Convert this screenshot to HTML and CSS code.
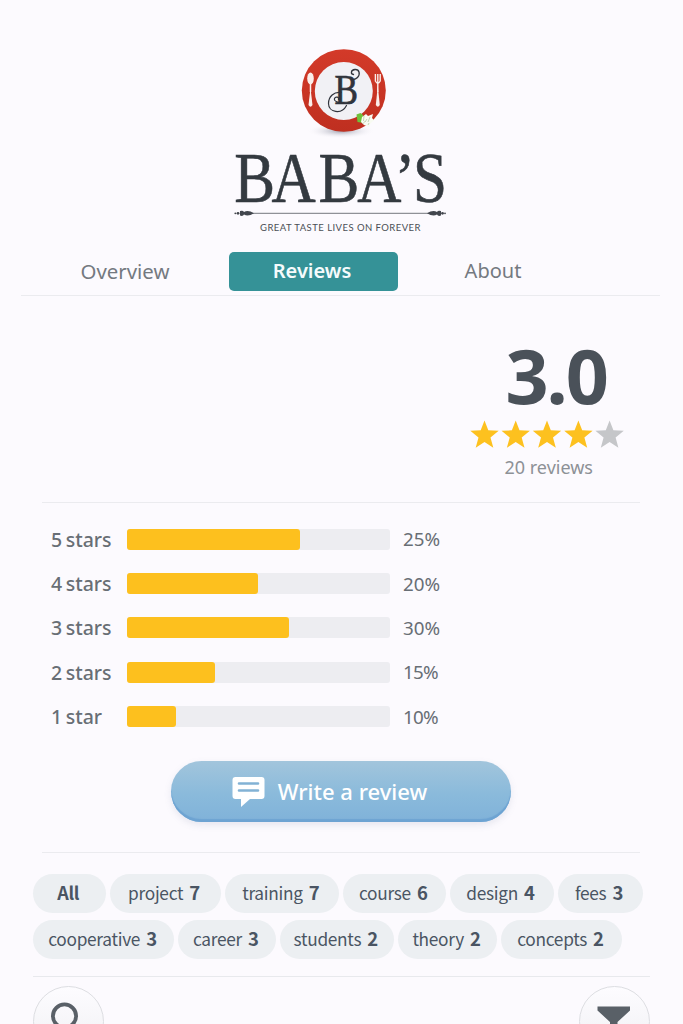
FILE: index.html
```html
<!DOCTYPE html>
<html lang="en">
<head>
<meta charset="utf-8">
<title>Baba's Reviews</title>
<link rel="stylesheet" href="styles.css">
</head>
<body>
<main class="page">
  <header class="brand">
    <svg class="logo" width="230" height="200" viewBox="225 40 230 200" role="img" aria-label="Baba's">
      <defs>
        <linearGradient id="plate" x1="0" y1="0" x2="0" y2="1"><stop offset="0" stop-color="#d33a29"/><stop offset="1" stop-color="#bf2f20"/></linearGradient>
        <radialGradient id="shade"><stop offset="0" stop-color="#9fa1b0"/><stop offset="1" stop-color="#fcfafe" stop-opacity="0"/></radialGradient>
      </defs>
      <ellipse cx="341" cy="131" rx="34" ry="7.500" fill="url(#shade)"/>
      <ellipse cx="343.800" cy="90.500" rx="42" ry="41.300" fill="url(#plate)"/>
      <circle cx="343.800" cy="91" r="29" fill="#f1f1f5"/>
      <g fill="#fbeeea" stroke="#fbeeea">
        <ellipse cx="310.500" cy="78.500" rx="3.300" ry="6" stroke="none"/>
        <path d="M310.500 82V92" fill="none" stroke-width="1.500"/>
        <path d="M310.500 88l2 17q-2 3.500-4 0z" stroke="none"/>
        <path d="M375.400 74v7q2.400 4.500 4.800 0v-7M377.800 74v18" fill="none" stroke-width="1.400"/>
        <path d="M377.800 86l2 19q-2 3.500-4 0z" stroke="none"/>
      </g>
      <text class="monogram" x="334.500" y="103.500" textLength="23.500" lengthAdjust="spacingAndGlyphs">B</text>
      <g fill="none" stroke="#30343c" stroke-linecap="round">
        <path d="M353.500 74.500c-3-.5-3-4.500 1.500-5c4.500-.3 5.500 5 2.500 8c-2 2-4 2-6 2.500" stroke-width="1.300"/>
        <path d="M344 102.500c-3 1-10.500-.5-9.500-4c1-2.500 5-1.500 4 1M341 92.500c-7-1-12.500 4-12.500 11c0 9 13 11.500 18 2" stroke-width="1.200"/>
      </g>
      <path d="M356.500 114.500l4-1.500 2.500 2 .5 8-6-1z" fill="#6fc13a"/>
      <path d="M362 117l4-3 2 2 5-2-1 4 2 2-4 4-1 3-5-2-3-3z" fill="#f8fbf2"/>
      <path d="M364 116l-.5 5M367 119l-2 3M370 117l-2 5M362.500 124l3-3M368 125l1-2" fill="none" stroke="#b7caa5" stroke-width=".8"/>
      <text class="wordmark" transform="scale(.85 1)" x="275.500 319.500 374.700 420.200 464.500 485.900" y="202">BABA’S</text>
      <path d="M252 213.300H429" stroke="#74777d" stroke-width="1"/>
      <g fill="#42464d">
        <path d="M240 211q3-1 4 1 4-2.500 10 1.300-6 3.800-10 1.300-1 2-4 1z"/><circle cx="238" cy="213.300" r="1.400"/><circle cx="235.300" cy="213.300" r=".9"/>
        <path d="M441 211q-3-1-4 1-4-2.500-10 1.300 6 3.800 10 1.300 1 2 4 1z"/><circle cx="442.500" cy="213.300" r="1.400"/><circle cx="445" cy="213.300" r=".9"/>
      </g>
      <text class="tagline" x="260" y="230.800" textLength="160.500">GREAT TASTE LIVES ON FOREVER</text>
    </svg>
  </header>

  <nav class="tabs">
    <a class="tab tab-overview">Overview</a>
    <a class="tab tab-active">Reviews</a>
    <a class="tab tab-about">About</a>
  </nav>

  <section class="rating">
    <div class="score">3.0</div>
    <svg class="stars" width="156" height="32" viewBox="0 0 156 32" fill="#fdc11f">
      <defs><path id="star" d="M0-14.500L3.800-4.700 14.200-4.200 6 2.400 8.800 12.700 0 7-8.800 12.700-6 2.400-14.200-4.200-3.800-4.700z"/></defs>
      <use href="#star" x="15.500" y="16"/><use href="#star" x="46.700" y="16"/><use href="#star" x="78" y="16"/><use href="#star" x="109.400" y="16"/><use href="#star" x="140.600" y="16" fill="#c5c6c9"/>
    </svg>
    <div class="count">20 reviews</div>
  </section>

  <section class="bars">
    <div class="bar-row"><span class="label">5 stars</span><div class="track"><div class="fill" style="width:172.500px"></div></div><span class="percent">25%</span></div>
    <div class="bar-row"><span class="label">4 stars</span><div class="track"><div class="fill" style="width:131px"></div></div><span class="percent">20%</span></div>
    <div class="bar-row"><span class="label">3 stars</span><div class="track"><div class="fill" style="width:162px"></div></div><span class="percent">30%</span></div>
    <div class="bar-row"><span class="label">2 stars</span><div class="track"><div class="fill" style="width:88px"></div></div><span class="percent narrow">15%</span></div>
    <div class="bar-row"><span class="label">1 star</span><div class="track"><div class="fill" style="width:48.500px"></div></div><span class="percent narrow">10%</span></div>
  </section>

  <button class="write">
    <svg width="34" height="32" viewBox="0 0 34 32"><path d="M3.500 1h26a3 3 0 0 1 3 3v16a3 3 0 0 1-3 3H18l-9 8v-8H3.500a3 3 0 0 1-3-3V4a3 3 0 0 1 3-3z" fill="#fff"/><path d="M7 7.500h19M7 14.500h19" stroke="#82b2d5" stroke-width="2.600" stroke-linecap="round"/></svg>
    <span>Write a review</span>
  </button>

  <section class="topics">
    <div class="chips">
      <span class="chip all" style="width:72.500px">All</span>
      <span class="chip" style="width:111px">project <b>7</b></span>
      <span class="chip" style="width:114.500px">training <b>7</b></span>
      <span class="chip" style="width:102.500px">course <b>6</b></span>
      <span class="chip" style="width:104px">design <b>4</b></span>
      <span class="chip" style="width:85px">fees <b>3</b></span>
    </div>
    <div class="chips">
      <span class="chip" style="width:141px">cooperative <b>3</b></span>
      <span class="chip" style="width:97.500px">career <b>3</b></span>
      <span class="chip" style="width:114.500px">students <b>2</b></span>
      <span class="chip" style="width:99px">theory <b>2</b></span>
      <span class="chip" style="width:121px">concepts <b>2</b></span>
    </div>
  </section>

  <footer class="tools">
    <button class="round" aria-label="Search"><svg width="68" height="68" viewBox="0 0 68 68"><circle cx="30.500" cy="28" r="11.600" fill="none" stroke="#596067" stroke-width="3.800"/><path d="M39 37l10 10" stroke="#596067" stroke-width="4"/></svg></button>
    <button class="round" aria-label="Filter"><svg width="68" height="68" viewBox="0 0 68 68"><path d="M17.500 18.500h32.500v4L37.500 34v16l-7.500-5V34L17.500 22.500z" fill="#596067"/></svg></button>
  </footer>
</main>
</body>
</html>
```
FILE: styles.css
```css
* { box-sizing: border-box; }
body {
  margin: 0;
  background: #fcfafe;
  font-family: "Noto Sans", "Open Sans", sans-serif;
  color: #686e75;
}
.page { width: 683px; height: 1024px; overflow: hidden; display: flex; flex-direction: column; }
.brand { height: 252px; padding: 40px 0 0 225px; flex: none; }
.logo { display: block; }
.monogram { font: 42px "Liberation Serif", serif; fill: #30343c; stroke: #30343c; stroke-width: .7px; }
.wordmark { font: 72px "Liberation Serif", serif; fill: #343a40; stroke: #343a40; stroke-width: .6px; }
.tagline { font: 9.500px Lato, sans-serif; fill: #4b4f55; }

.tabs {
  flex: none;
  height: 44px;
  margin: 0 23px 0 21px;
  border-bottom: 1px solid #ebebef;
  display: grid;
  grid-template-columns: 208px 169px 190px;
}
.tab { height: 39px; line-height: 38px; font-size: 20.400px; text-align: center; color: #747980; }
.tab-about { font-size: 20px; }
.tab-active { background: #359297; border-radius: 5px; color: #f5fbfc; font-size: 20px; font-weight: 600; padding-right: 3px; }

.rating {
  flex: none;
  height: 207px;
  margin: 0 43px 0 42px;
  padding: 39px 15px 0 0;
  border-bottom: 1px solid #ebebef;
  display: flex;
  flex-direction: column;
  align-items: flex-end;
}
.score { height: 84px; line-height: 80px; font-size: 75.500px; font-weight: 700; color: #4a5159; letter-spacing: -2px; padding-right: 18px; }
.stars { flex: none; }
.count { font-size: 18px; line-height: 32px; color: #8d9196; padding-right: 32px; }

.bars { flex: none; height: 258px; padding: 14px 0 0 51px; }
.bar-row { height: 44.400px; display: flex; align-items: center; }
.label { width: 76px; font-size: 19.500px; font-weight: 500; white-space: nowrap; word-spacing: -1.500px; }
.track { width: 263px; height: 21px; background: #ededf1; border-radius: 3px; }
.fill { height: 100%; background: #fdc01e; border-radius: 3px; }
.percent { padding-left: 13px; font-size: 18.800px; }
.narrow { letter-spacing: -.8px; }

.write {
  flex: none;
  width: 340px;
  height: 61px;
  margin: 0 0 0 171px;
  padding: 0 23px 2px 0;
  border: 0;
  border-radius: 31px;
  background: linear-gradient(#a2c5dc, #8abadb 55%, #80b2d9);
  box-shadow: inset 0 -3px 1px #6da3d2, 0 3px 7px #69789926;
  display: flex;
  align-items: center;
  justify-content: center;
  gap: 12px;
  color: #fff;
  font: 500 22px "Noto Sans", sans-serif;
}
.write svg { margin-top: 2px; }

.topics {
  flex: none;
  height: 125px;
  margin-top: 30px;
  display: flex;
  flex-direction: column;
  gap: 7px;
}
.topics::before { content: ""; height: 1px; margin: 0 43px 14px 42px; background: #ebebef; flex: none; }
.chips { display: flex; gap: 4px; padding-left: 33px; }
.chip {
  flex: none;
  height: 39px;
  line-height: 37px;
  border-radius: 20px;
  background: #eceff2;
  color: #4a5563;
  font-family: "Noto Sans CJK SC", sans-serif;
  font-size: 17.300px;
  letter-spacing: -.3px;
  padding-right: 2px;
  text-align: center;
  white-space: nowrap;
}
.chip b { font-weight: 700; font-size: 18.500px; margin-left: 2.500px; line-height: 1; }
.all { font-weight: 700; font-size: 18px; }

.tools {
  flex: none;
  height: 120px;
  margin: -1px 33px 0;
  padding-top: 9px;
  border-top: 1px solid #e8e9ed;
  display: flex;
  justify-content: space-between;
  align-items: flex-start;
}
.round {
  width: 71px;
  height: 71px;
  padding: 0;
  border: 1.500px solid #dddee2;
  border-radius: 50%;
  background: linear-gradient(#fdfcff, #f0f0f3);
}
.round svg { display: block; }
```
